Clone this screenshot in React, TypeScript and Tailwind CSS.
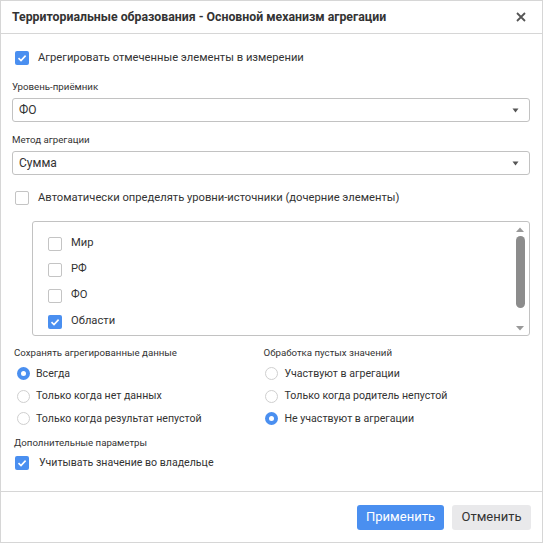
import React from "react";

function Check({ checked }: { checked: boolean }) {
  return checked ? (
    <div className="w-[14px] h-[14px] rounded-[2px] bg-[#4a8ff0] flex items-center justify-center shrink-0">
      <svg width="10" height="10" viewBox="0 0 10 10">
        <path d="M1.5 5.2 L4 7.6 L8.6 2.6" fill="none" stroke="white" strokeWidth="1.6" />
      </svg>
    </div>
  ) : (
    <div className="w-[14px] h-[14px] rounded-[2px] border-[1.5px] border-[#c4c4c4] bg-white shrink-0" />
  );
}

function Radio({ checked }: { checked: boolean }) {
  return checked ? (
    <div className="w-[13px] h-[13px] rounded-full bg-[#4a8ff0] flex items-center justify-center shrink-0">
      <div className="w-[5px] h-[5px] rounded-full bg-white" />
    </div>
  ) : (
    <div className="w-[13px] h-[13px] rounded-full border border-[#cfcfcf] bg-white shrink-0" />
  );
}

function Select({ value }: { value: string }) {
  return (
    <div className="h-[24px] border border-[#c2c2c2] rounded-[3px] flex items-center justify-between pl-[6px] pr-[10px] text-[12px] text-[#333]">
      <span>{value}</span>
      <svg width="7" height="5" viewBox="0 0 7 5">
        <path d="M0.5 0.5 L6.5 0.5 L3.5 4.5 Z" fill="#555" />
      </svg>
    </div>
  );
}

export default function App() {
  const items: [string, boolean][] = [
    ["Мир", false],
    ["РФ", false],
    ["ФО", false],
    ["Области", true],
  ];
  return (
    <div
      className="w-[543px] h-[543px] border border-[#d6d6d6] bg-white flex flex-col text-[#333]"
      style={{ fontFamily: "Roboto, 'Noto Sans', sans-serif" }}
    >
      <div className="h-[33px] border-b border-[#d6d6d6] flex items-center justify-between pl-[11px] pr-[16px] shrink-0">
        <span className="text-[12.3px] font-bold text-[#333]">
          Территориальные образования - Основной механизм агрегации
        </span>
        <svg width="10" height="10" viewBox="0 0 10 10">
          <path d="M1 1 L9 9 M9 1 L1 9" stroke="#555" strokeWidth="1.8" />
        </svg>
      </div>

      <div className="flex-1 flex flex-col px-[11px]">
        <div className="flex items-center gap-[9px] pl-[3px] mt-[17px] h-[14px]">
          <Check checked />
          <span className="text-[11.2px]">Агрегировать отмеченные элементы в измерении</span>
        </div>

        <div className="text-[9.7px] mt-[16px] leading-[12px]">Уровень-приёмник</div>
        <div className="mt-[5px] mr-[1px]">
          <Select value="ФО" />
        </div>

        <div className="text-[9.7px] mt-[12px] leading-[12px]">Метод агрегации</div>
        <div className="mt-[5px] mr-[1px]">
          <Select value="Сумма" />
        </div>

        <div className="flex items-center gap-[9px] pl-[3px] mt-[16px] h-[14px]">
          <Check checked={false} />
          <span className="text-[11.2px]">Автоматически определять уровни-источники (дочерние элементы)</span>
        </div>

        <div className="ml-[20px] mr-[1px] mt-[16px] h-[115px] border border-[#c2c2c2] rounded-[3px] flex">
          <div className="flex-1 flex flex-col pl-[15px] pt-[14px] gap-[11px]">
            {items.map(([label, c]) => (
              <div key={label} className="flex items-center gap-[9px] h-[15px]">
                <Check checked={c} />
                <span className="text-[11.2px]">{label}</span>
              </div>
            ))}
          </div>
          <div className="w-[14px] flex flex-col items-center pt-[5px] pb-[4px] mr-[2px]">
            <svg width="8" height="5" viewBox="0 0 8 5">
              <path d="M0 5 L4 0.5 L8 5 Z" fill="#999" />
            </svg>
            <div className="w-[9px] h-[72px] rounded-full bg-[#8c8c8c] mt-[4px]" />
            <div className="flex-1" />
            <svg width="8" height="5" viewBox="0 0 8 5">
              <path d="M0 0 L8 0 L4 4.5 Z" fill="#999" />
            </svg>
          </div>
        </div>

        <div className="grid grid-cols-2 mt-[11px]">
          <div className="flex flex-col">
            <div className="text-[9.7px] leading-[12px] pl-[2px]">Сохранять агрегированные данные</div>
            <div className="flex flex-col gap-[9.5px] mt-[8px] pl-[5px]">
              {[
                ["Всегда", true],
                ["Только когда нет данных", false],
                ["Только когда результат непустой", false],
              ].map(([l, c]) => (
                <div key={l as string} className="flex items-center gap-[6px] h-[13px]">
                  <Radio checked={c as boolean} />
                  <span className="text-[10.6px]">{l as string}</span>
                </div>
              ))}
            </div>
          </div>
          <div className="flex flex-col ml-[-10px]">
            <div className="text-[9.7px] leading-[12px] pl-[2px]">Обработка пустых значений</div>
            <div className="flex flex-col gap-[9.5px] mt-[8px] pl-[3px]">
              {[
                ["Участвуют в агрегации", false],
                ["Только когда родитель непустой", false],
                ["Не участвуют в агрегации", true],
              ].map(([l, c]) => (
                <div key={l as string} className="flex items-center gap-[7px] h-[13px]">
                  <Radio checked={c as boolean} />
                  <span className="text-[10.6px]">{l as string}</span>
                </div>
              ))}
            </div>
          </div>
        </div>

        <div className="text-[9.7px] leading-[12px] mt-[12px] pl-[2px]">Дополнительные параметры</div>
        <div className="flex items-center gap-[10px] pl-[3px] mt-[7px] h-[14px]">
          <Check checked />
          <span className="text-[10.6px]">Учитывать значение во владельце</span>
        </div>
      </div>

      <div className="h-[51px] border-t border-[#d6d6d6] flex items-center justify-end gap-[8px] pr-[11px] shrink-0">
        <button className="h-[25px] w-[87px] rounded-[3px] bg-[#4a8ff0] text-white text-[13px]">Применить</button>
        <button className="h-[25px] w-[79px] rounded-[3px] bg-[#e9e9eb] text-[#333] text-[13px]">Отменить</button>
      </div>
    </div>
  );
}
